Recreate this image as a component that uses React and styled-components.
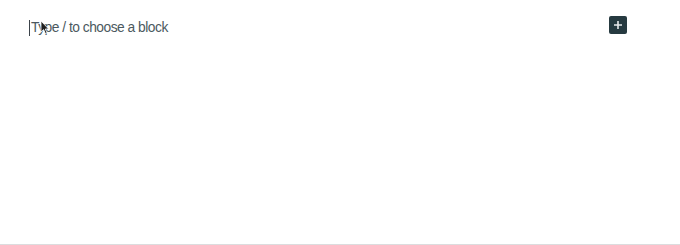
import React from "react";
import styled, { createGlobalStyle } from "styled-components";

const GlobalStyle = createGlobalStyle`
  html, body {
    margin: 0;
    padding: 0;
    background: #fff;
  }
  body {
    font-family: "Liberation Sans", Arial, sans-serif;
  }
`;

const Page = styled.div`
  width: 680px;
  height: 245px;
  box-sizing: border-box;
  border-bottom: 1px solid #dcdcde;
  display: flex;
  flex-direction: column;
`;

const BlockRow = styled.div`
  display: flex;
  align-items: flex-start;
  justify-content: space-between;
  padding: 16px 53px 0 29px;
`;

const Placeholder = styled.div`
  position: relative;
  display: flex;
  align-items: center;
  margin-top: 2px;
  font-size: 13.8px;
  letter-spacing: -0.5px;
  line-height: 20px;
  color: #4b5960;
`;

const Caret = styled.span`
  display: inline-block;
  width: 1px;
  height: 16px;
  margin-right: 1px;
  background: #3c434a;
`;

const Pointer = styled.svg`
  position: absolute;
  left: 11px;
  top: 2px;
`;

const InserterButton = styled.button`
  width: 18px;
  height: 18px;
  padding: 0;
  border: none;
  border-radius: 2px;
  background: #263a40;
  color: #fff;
  display: flex;
  align-items: center;
  justify-content: center;
  cursor: pointer;
`;

export default function App() {
  return (
    <>
      <GlobalStyle />
      <Page>
        <BlockRow>
          <Placeholder>
            <Caret />
            Type / to choose a block
            <Pointer width="10" height="15" viewBox="0 0 10 15">
              <path d="M1 1 L1 12 L3.6 9.6 L5.4 13.6 L7 12.9 L5.3 9 L8.6 9 Z" fill="#1e1e1e" stroke="#fff" strokeWidth="0.8" />
            </Pointer>
          </Placeholder>
          <InserterButton aria-label="Add block">
            <svg width="10" height="10" viewBox="0 0 10 10">
              <path d="M5 1 V9 M1 5 H9" stroke="#e8eaeb" strokeWidth="1.6" />
            </svg>
          </InserterButton>
        </BlockRow>
      </Page>
    </>
  );
}
